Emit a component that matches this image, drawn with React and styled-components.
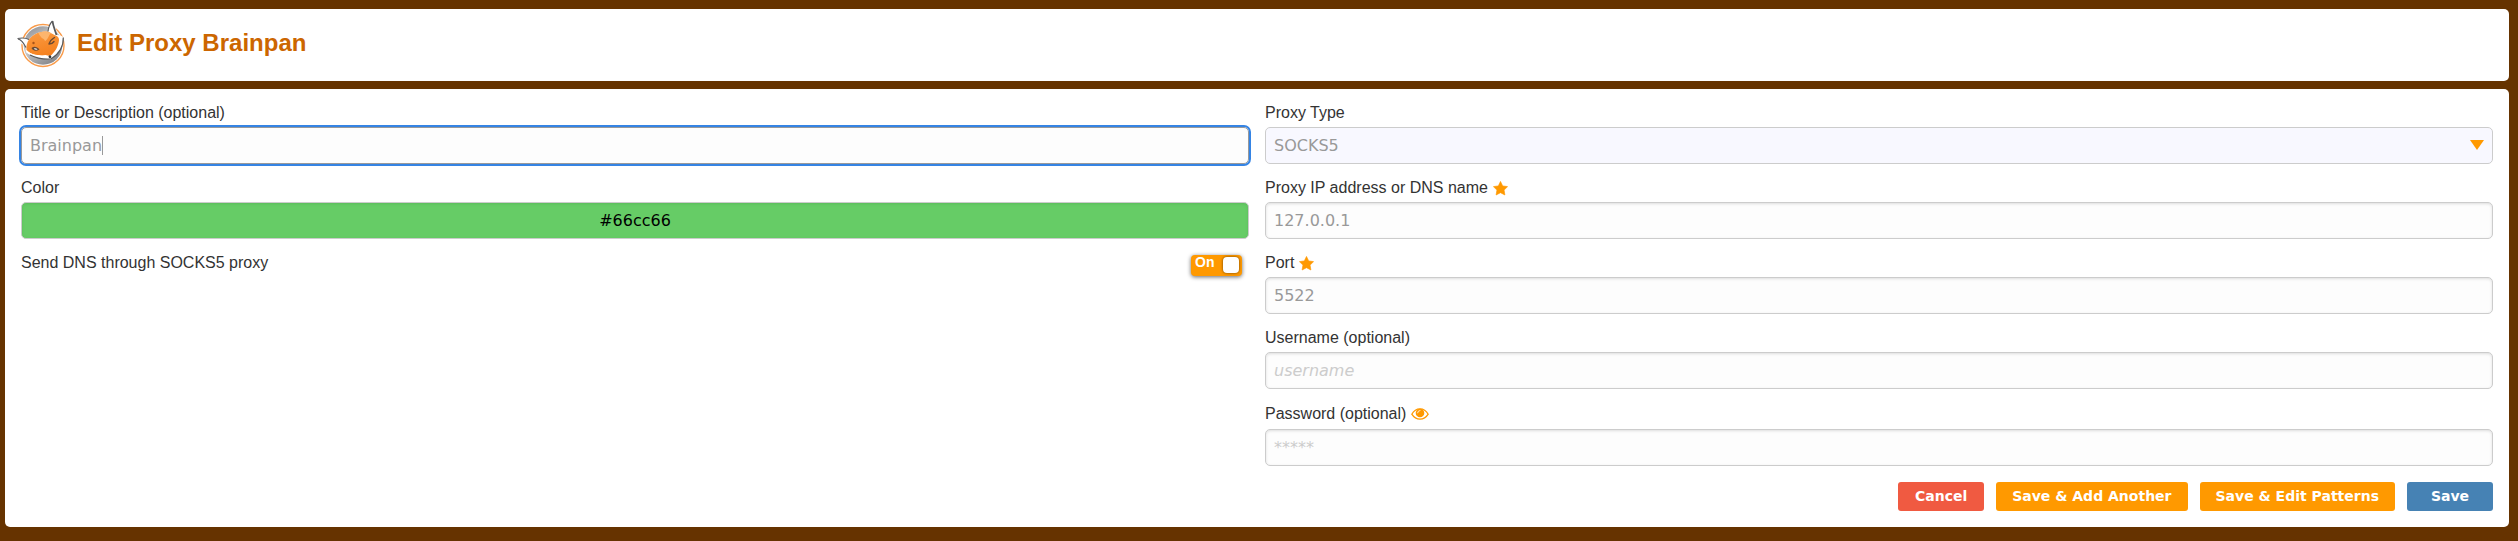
import React, { useState } from 'react';
import styled, { createGlobalStyle, css } from 'styled-components';

const GlobalStyle = createGlobalStyle`
  *, *::before, *::after { box-sizing: border-box; }
  html { background: #663300; }
  body {
    margin: 0;
    padding: 9px 9px 14px 5px;
    background: #663300;
    color: #333;
    font: 16px/22px "Liberation Sans", Arial, sans-serif;
  }
`;

const Page = styled.main`
  display: flex;
  flex-direction: column;
  gap: 8px;
`;

const Header = styled.header`
  display: flex;
  align-items: center;
  gap: 12px;
  min-height: 72px;
  padding: 8px 12px 10px;
  border-radius: 5px;
  background: #fff;
`;

const Title = styled.h1`
  margin: 0;
  padding-bottom: 2px;
  font-size: 24px;
  line-height: 30px;
  color: #cc6600;
`;

const Panel = styled.form`
  padding: 16px;
  border-radius: 5px;
  background: #fff;
`;

const Columns = styled.div`
  display: grid;
  grid-template-columns: 1fr 1fr;
  gap: 16px;
`;

const Column = styled.div`
  display: flex;
  flex-direction: column;
  gap: 16px;
  min-width: 0;
`;

const Field = styled.div`
  display: flex;
  flex-direction: column;
`;

const LabelRow = styled.div`
  display: flex;
  align-items: center;
  gap: 5px;
  min-height: ${(p) => (p.$tall ? '24px' : '22px')};
  padding-bottom: 6px;
  line-height: 16px;
`;

const control = css`
  display: block;
  width: 100%;
  height: 37px;
  margin: 0;
  padding: 0 8px;
  border: 1px solid #ccc;
  border-radius: 5px;
  background: #fdfdfd;
  color: #999;
  font: 16px "DejaVu Sans", sans-serif;
`;

const ControlBox = styled.div`
  position: relative;
`;

const TextInput = styled.input`
  ${control}
  box-shadow: inset 0 1px 3px #ddd;

  &::placeholder {
    color: #ccc;
    opacity: 1;
    font-style: ${(p) => (p.type === 'password' ? 'normal' : 'italic')};
  }

  &:focus {
    border-color: #999;
    outline: 2px solid #3584e4;
    outline-offset: 0;
    box-shadow: none;
    caret-color: transparent;
  }
`;

const Caret = styled.span`
  position: absolute;
  top: 9px;
  left: 81px;
  width: 1px;
  height: 19px;
  background: #999;
  pointer-events: none;
`;

const ColorInput = styled(TextInput)`
  background: #66cc66;
  color: #000;
  text-align: center;
  box-shadow: inset 0 1px 3px #5aba5a;
`;

const Select = styled.select`
  ${control}
  appearance: none;
  background: #f8f8ff;
`;

const Arrow = styled.svg`
  position: absolute;
  top: 13px;
  right: 9px;
  pointer-events: none;
`;

const SwitchRow = styled.div`
  display: flex;
  justify-content: space-between;
  padding-right: 7px;
  line-height: 16px;
`;

const Switch = styled.label`
  display: flex;
  justify-content: space-between;
  width: 51px;
  height: 21px;
  padding: 2px 3px 3px 4px;
  border-radius: 4px;
  background: #ff9900;
  box-shadow: 0 1px 4px rgba(0, 0, 0, 0.6);
  color: #fff;
  font-size: 14px;
  font-weight: bold;
  line-height: 10px;
  cursor: pointer;
`;

const SwitchInput = styled.input`
  appearance: none;
  width: 16px;
  height: 16px;
  margin: 0;
  border-radius: 4px;
  background: #fff;
  box-shadow: 0 0 3px rgba(0, 0, 0, 0.6);
`;

const EyeButton = styled.button`
  display: flex;
  padding: 0;
  border: 0;
  background: none;
  color: #ff9900;
`;

const Actions = styled.div`
  display: flex;
  justify-content: flex-end;
  gap: 12px;
  margin-top: 16px;
`;

const Button = styled.button`
  min-width: 86px;
  height: 29px;
  padding: 0 16px 1px;
  border: 0;
  border-radius: 3px;
  background: ${(p) => p.$color};
  color: #fff;
  font: bold 14px "DejaVu Sans", sans-serif;
  white-space: nowrap;
`;

const Star = () => (
  <svg width="15" height="15" viewBox="0 0 15 15" aria-label="required">
    <path
      fill="#ff9900"
      stroke="#ff9900"
      strokeWidth="0.6"
      strokeLinejoin="round"
      d="M7.500 0.400 9.700 4.900 14.600 5.600 11.100 9.100 11.900 14 7.500 11.700 3.100 14 3.900 9.100 0.400 5.600 5.300 4.900z"
    />
  </svg>
);

const Eye = () => (
  <svg width="18" height="12" viewBox="0 0 18 12" fill="none">
    <path d="M0.800 6.200C2.700 2.900 5.700 0.900 9 0.900s6.300 2 8.200 5.300C15.300 9.200 12.300 11.200 9 11.200S2.700 9.200 0.800 6.200z" stroke="currentColor" strokeWidth="1.300" />
    <circle cx="9" cy="5" r="4.300" fill="currentColor" />
    <path d="M6.600 4.800A2.500 2.500 0 0 1 9 2.500" stroke="#fff" strokeWidth="0.800" strokeLinecap="round" />
  </svg>
);

const FoxLogo = () => (
  <svg width="48" height="48" viewBox="0 0 48 48" aria-hidden="true">
    <defs>
      <linearGradient id="disc" x1="0" y1="0" x2="0.6" y2="1">
        <stop offset="0" stopColor="#85878b" />
        <stop offset="0.5" stopColor="#c9cacc" />
        <stop offset="1" stopColor="#898b8f" />
      </linearGradient>
      <linearGradient id="fur" x1="0" y1="0" x2="0.4" y2="1">
        <stop offset="0" stopColor="#fb9d45" />
        <stop offset="1" stopColor="#f58220" />
      </linearGradient>
    </defs>
    <circle cx="26" cy="25.500" r="21" fill="#fff" stroke="#f99b4a" strokeWidth="1.400" />
    <circle cx="26" cy="25.500" r="19.300" fill="url(#disc)" />
    {/* head and ears */}
    <path d="M0.500 18.500C5 17.500 9 18 12 19.500C17 13 24 11 31 11.500C31.500 7 33 3.500 35.500 1C38.500 5 40 10 39.500 15C43 15 45.500 16 46.500 17.500C46.500 26 42 34 34 39.500C26 39.500 16 37 9.500 32.500C8.500 30.500 8.500 28.500 9 26.500C5 25 2.500 22 0.500 18.500z" fill="#fff" />
    <path d="M12 19.500C17 13 24 11 31 11.500L38.500 15.500C41 16 42 18 42 20C41.500 26 38.500 31 35 34.500C33.500 36.500 31 35.500 28.500 35C22 36.500 13 34.500 9.500 30C9 26 10 22.500 12 19.500z" fill="url(#fur)" />
    <path d="M21.500 13C24 19 27 18 28 21C31 20 31.500 15 34 13C30 11.300 26 11.500 21.500 13z" fill="#fdb56d" />
    <path d="M9.500 30C13 34 18 35 22 35C26 36 29 37.500 32 38.500C24 39 14 36 9.500 32.500z" fill="#fff" />
    {/* outlines */}
    <path d="M0.500 18.500C5 17.500 9 18 12 19.500M1 19C5 20 6.500 23 9 27.500M31 11.500C31.500 7 33 3.500 35.500 1" fill="none" stroke="#58595b" strokeWidth="1.100" />
    <path d="M35.500 1C36 6 38 10 39.500 15" fill="none" stroke="#58595b" strokeWidth="1.800" />
    <path d="M46.300 17.500C46.500 26 42 34 34 39C27 39.500 19 38 13 35" fill="none" stroke="#58595b" strokeWidth="1.200" />
    {/* face */}
    <path d="M14.500 28C17 26 20 26.500 22.500 29.500C19 31.500 16 31 14.500 28z" fill="#6b4a33" />
    <path d="M16.800 28.600c1.200-.800 2.600-.600 3.800.900c-1.500.700-2.900.400-3.800-.900z" fill="#e6eef0" />
    <path d="M32 24C33 20.500 35 19 37.500 17.500M32 24C34.500 24 36 23 37 21.500" fill="none" stroke="#6b4a33" strokeWidth="1.400" strokeLinecap="round" />
    <circle cx="16.500" cy="23" r="1.200" fill="#a8541a" />
    <path d="M31.500 36C32.500 34.500 34.500 35 34.300 37.500C33 38.800 31.500 38 31.500 36z" fill="#333" />
  </svg>
);

function TextField({ id, label, required, caret, ...rest }) {
  return (
    <Field>
      <LabelRow>
        <label htmlFor={id}>{label}</label>
        {required && <Star />}
      </LabelRow>
      <ControlBox>
        <TextInput id={id} type="text" {...rest} />
        {caret && <Caret />}
      </ControlBox>
    </Field>
  );
}

export default function App() {
  const [dns, setDns] = useState(true);
  const [visible, setVisible] = useState(false);

  return (
    <>
      <GlobalStyle />
      <Page>
        <Header>
          <FoxLogo />
          <Title>Edit Proxy Brainpan</Title>
        </Header>
        <Panel onSubmit={(e) => e.preventDefault()}>
          <Columns>
            <Column>
              <TextField id="title" label="Title or Description (optional)" defaultValue="Brainpan" autoFocus caret />
              <Field>
                <LabelRow>
                  <label htmlFor="color">Color</label>
                </LabelRow>
                <ColorInput id="color" defaultValue="#66cc66" />
              </Field>
              <SwitchRow>
                <label htmlFor="dns">Send DNS through SOCKS5 proxy</label>
                <Switch>
                  {dns ? 'On' : 'Off'}
                  <SwitchInput id="dns" type="checkbox" checked={dns} onChange={(e) => setDns(e.target.checked)} />
                </Switch>
              </SwitchRow>
            </Column>
            <Column>
              <Field>
                <LabelRow>
                  <label htmlFor="type">Proxy Type</label>
                </LabelRow>
                <ControlBox>
                  <Select id="type" defaultValue="SOCKS5">
                    <option>SOCKS5</option>
                    <option>SOCKS4</option>
                    <option>HTTP</option>
                  </Select>
                  <Arrow width="14" height="10" viewBox="0 0 14 10">
                    <path d="M0 0H14L7 10z" fill="#ff9900" />
                  </Arrow>
                </ControlBox>
              </Field>
              <TextField id="address" label="Proxy IP address or DNS name" required defaultValue="127.0.0.1" />
              <TextField id="port" label="Port" required defaultValue="5522" />
              <TextField id="username" label="Username (optional)" placeholder="username" />
              <Field>
                <LabelRow $tall>
                  <label htmlFor="password">Password (optional)</label>
                  <EyeButton type="button" aria-label="Show password" onClick={() => setVisible(!visible)}>
                    <Eye />
                  </EyeButton>
                </LabelRow>
                <TextInput id="password" type={visible ? 'text' : 'password'} placeholder="*****" />
              </Field>
            </Column>
          </Columns>
          <Actions>
            <Button type="button" $color="#f05a41">Cancel</Button>
            <Button type="button" $color="#ff9900">Save &amp; Add Another</Button>
            <Button type="button" $color="#ff9900">Save &amp; Edit Patterns</Button>
            <Button type="submit" $color="#4682b4">Save</Button>
          </Actions>
        </Panel>
      </Page>
    </>
  );
}
